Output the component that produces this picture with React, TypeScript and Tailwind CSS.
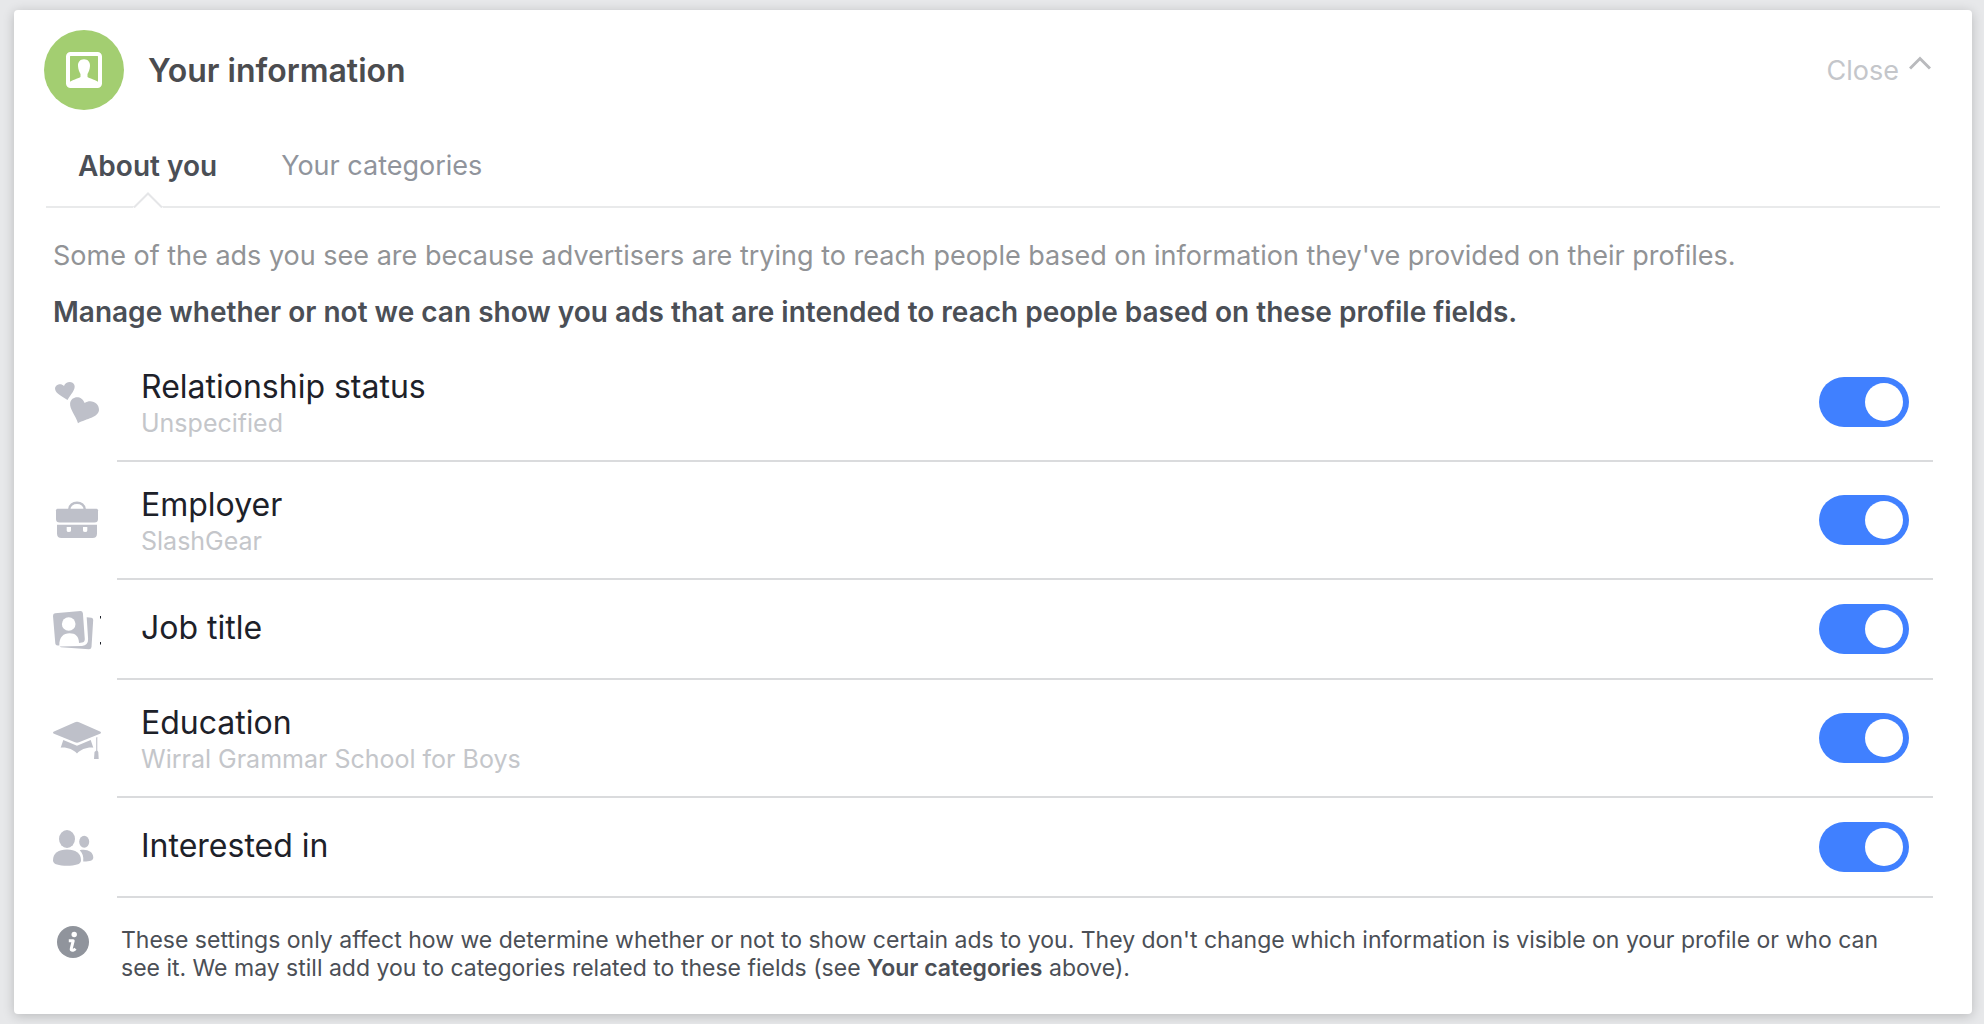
import { useState } from "react"
import type { ReactNode } from "react"

const HeartsIcon = () => (
    <svg viewBox="0 0 48 48" className="size-12" fill="currentColor" aria-hidden="true">
        <path d="M14.500 22C9.500 18.600 3 15.800 2.100 11.200C1.400 7 7.500 4.300 11 8C12.500 3.200 19.800 2.500 21.400 7C23 11.500 17.500 16.500 14.500 22Z" />
        <path d="M25 45.200C22.500 37 16.500 31.500 17.100 25.300C17.900 18 28.800 16.500 31.600 25C38.500 20.500 46.300 25.500 46 32C45.500 39.500 33.500 40.500 25 45.200Z" />
    </svg>
)

const BriefcaseIcon = () => (
    <svg viewBox="0 0 48 48" className="size-12" fill="currentColor" aria-hidden="true">
        <path d="M16.200 13.500C16.200 4.500 31.800 4.500 31.800 13.500" fill="none" stroke="currentColor" strokeWidth="2.400" />
        <path d="M4.500 12.700H43.500Q45 12.700 45 14.200V23Q45 26.500 41.500 26.500H6.500Q3 26.500 3 23V14.200Q3 12.700 4.500 12.700Z" />
        <path fillRule="evenodd" d="M4 28.700H44V37.500Q44 42 39.500 42H8.500Q4 42 4 37.500ZM13.700 31V34.500Q13.700 36 15.800 36Q18 36 18 34.500V31ZM30 31V34.500Q30 36 32.200 36Q34.300 36 34.300 34.500V31Z" />
    </svg>
)

const PhotosIcon = () => (
    <svg viewBox="0 0 48 48" className="size-12" fill="currentColor" aria-hidden="true">
        <path d="M2 8.300L27.500 6Q29.600 6 29.900 8.200L31.800 34Q31.800 37.200 29 37.600L26 38C26 31.500 22.500 28.300 16.500 28.300C10.500 28.300 6.300 32 6.300 40.500L4.500 40.600Q2.600 40.600 2.300 38.500L0 11Q0 8.600 2 8.300Z" />
        <circle cx="15.700" cy="19" r="6.800" fill="white" />
        <path d="M33.700 12.200L38.500 12.700Q40.300 13 40.200 15L38.500 42Q38.200 44.200 36 44.200L8 42.200L6.500 41.500L29 40.900Q35.300 40.200 35.100 34Z" />
        <path d="M47 11h1v2.500h-1zM47 37h1v2.500h-1z" fill="#1d2129" />
    </svg>
)

const GraduationIcon = () => (
    <svg viewBox="0 0 48 48" className="size-12" fill="currentColor" aria-hidden="true">
        <path d="M22 8.200Q24 7.300 26 8.200L47 17.600Q49 18.700 47 19.700L26 28.300Q24 29.200 22 28.300L1 19.700Q-1 18.700 1 17.600Z" />
        <path d="M10.300 26L24 31.800L37.700 26L40.300 33.700C34 33 28 35.500 24 39.400C20 35.500 14 33 7.700 33.700Z" />
        <path d="M43.200 23.500L44.300 23V36.500L45.300 38L45.700 45H41L41.500 38L43.200 36.500Z" />
    </svg>
)

const FriendsIcon = () => (
    <svg viewBox="0 0 48 48" className="size-12" fill="currentColor" aria-hidden="true">
        <ellipse cx="14" cy="16" rx="8" ry="9" />
        <ellipse cx="31.200" cy="18.800" rx="5" ry="6" />
        <path d="M0 37.500C0 30 5.500 26.500 14 26.500C22.500 26.500 28 30 28 37.500C28 41.500 22 42.700 14 42.700C6 42.700 0 41.500 0 37.500Z" />
        <path d="M26.700 27.300C33.500 25.700 40.300 28.500 40.300 34.500C40.300 38 36 38.600 30.200 38.500C30.800 33.500 29.500 30 26.700 27.300Z" />
    </svg>
)

const ProfileIcon = () => (
    <svg viewBox="0 0 36 36" className="size-9" aria-hidden="true">
        <rect x="2" y="2" width="32" height="32" rx="2.500" fill="none" stroke="white" strokeWidth="4" />
        <path d="M18 7.200C22 7.200 24.200 10 24 14C23.800 17.500 22.500 20.500 21.500 22V25C24.500 27 29.500 27.500 33 30.500V34H3V30.500C6.500 27.500 11.500 27 14.500 25V22C13.500 20.500 12.200 17.500 12 14C11.800 10 14 7.200 18 7.200Z" fill="white" />
    </svg>
)

const InfoIcon = () => (
    <svg viewBox="0 0 32 32" className="size-8" aria-hidden="true">
        <circle cx="16" cy="16" r="16" fill="#90949c" />
        <circle cx="17.200" cy="8.500" r="2.700" fill="white" />
        <path d="M11.800 14.800H16.200L14.300 22.500Q13.800 24.600 16 24.300Q17.300 24 18.500 22.800" fill="none" stroke="white" strokeWidth="3" strokeLinejoin="round" />
    </svg>
)

type Field = {
    id: string
    title: string
    value?: string
    icon: ReactNode
}

const fields: Field[] = [
    { id: "relationship", title: "Relationship status", value: "Unspecified", icon: <HeartsIcon /> },
    { id: "employer", title: "Employer", value: "SlashGear", icon: <BriefcaseIcon /> },
    { id: "job", title: "Job title", icon: <PhotosIcon /> },
    { id: "education", title: "Education", value: "Wirral Grammar School for Boys", icon: <GraduationIcon /> },
    { id: "interested", title: "Interested in", icon: <FriendsIcon /> },
]

function FieldRow({ id, title, value, icon }: Field) {
    const [on, setOn] = useState(true)
    return (
        <li className="flex items-stretch">
            <div className="flex w-16 shrink-0 items-center pb-0.5 text-[#bec0c9]">{icon}</div>
            <div className={`flex flex-1 items-center justify-between border-b-2 border-[#dadbdd] pr-6 pl-6 ${value ? "h-[118px]" : "h-[100px]"}`}>
                <div className={value ? "pt-0.5" : "pb-0.5"}>
                    <label htmlFor={id} className="block text-[32px] leading-10 text-[#1d2129]">{title}</label>
                    {value && <p className="text-[25px] leading-8 text-[#c4c6ca]">{value}</p>}
                </div>
                <input
                    id={id}
                    type="checkbox"
                    role="switch"
                    checked={on}
                    onChange={() => setOn(!on)}
                    className="h-[50px] w-[90px] shrink-0 cursor-pointer appearance-none rounded-full bg-[#bec2c9] p-1.5 before:block before:size-[38px] before:rounded-full before:bg-white checked:bg-[#4080ff] checked:before:translate-x-10"
                />
            </div>
        </li>
    )
}

export default function App() {
    return (
        <div className="min-h-screen bg-[#e7e8ea] pt-2.5 pr-3 pb-2.5 pl-3.5 font-['Inter','Liberation_Sans',sans-serif]">
            <section className="rounded-[4px] bg-white pt-5 pb-8 shadow-[0_2px_12px_rgba(0,0,0,0.2)]">
                <header className="flex items-center pr-[41px] pl-[30px]">
                    <div className="flex size-20 items-center justify-center rounded-full bg-[#a3ce71]">
                        <ProfileIcon />
                    </div>
                    <h1 className="ml-6 pt-0.5 text-[32px] leading-10 font-semibold text-[#4b4c4f]">Your information</h1>
                    <button type="button" className="ml-auto flex items-center gap-2.5 pt-0.5 text-[27px] leading-9 text-[#c4c6ca]">
                        Close
                        <svg viewBox="0 0 22 14" className="mb-4 h-3.5 w-[22px]" fill="none" stroke="#b9babd" strokeWidth="3" aria-hidden="true">
                            <path d="M1 12.500L11 2.500L21 12.500" />
                        </svg>
                    </button>
                </header>

                <nav className="mx-8 mt-[38px] flex border-b-2 border-[#e9eaeb] pl-8" aria-label="Your information">
                    <a href="#about" aria-current="page" className="relative pb-[22px] text-[28px] leading-9 font-semibold text-[#4b4f56]">
                        About you
                        <svg viewBox="0 0 30 16" className="absolute -bottom-0.5 left-1/2 h-4 w-[30px] -translate-x-1/2" aria-hidden="true">
                            <path d="M0 16L1 14L15 1L29 14L30 16Z" fill="white" />
                            <path d="M1 15.500L15 1.500L29 15.500" fill="none" stroke="#e5e6e8" strokeWidth="2" />
                        </svg>
                    </a>
                    <a href="#categories" className="ml-16 pb-[22px] text-[27px] leading-9 text-[#90949c]">Your categories</a>
                </nav>

                <div className="pr-[39px] pl-[39px]">
                    <p className="mt-[30px] text-[27px] leading-9 text-[#919396]">
                        Some of the ads you see are because advertisers are trying to reach people based on information they've provided on their profiles.
                    </p>
                    <p className="mt-5 text-[28px] leading-9 font-semibold text-[#4b4f56]">
                        Manage whether or not we can show you ads that are intended to reach people based on these profile fields.
                    </p>

                    <ul className="mt-3.5">
                        {fields.map((field) => (
                            <FieldRow key={field.id} {...field} />
                        ))}
                    </ul>

                    <footer className="mt-7 flex pr-6 pl-1">
                        <div className="w-16 shrink-0">
                            <InfoIcon />
                        </div>
                        <p className="text-[23px] leading-7 text-[#4b4f56]">
                            These settings only affect how we determine whether or not to show certain ads to you. They don't change which information is visible on your profile or who can see it. We may still add you to categories related to these fields (see <b className="font-semibold">Your categories</b> above).
                        </p>
                    </footer>
                </div>
            </section>
        </div>
    )
}
